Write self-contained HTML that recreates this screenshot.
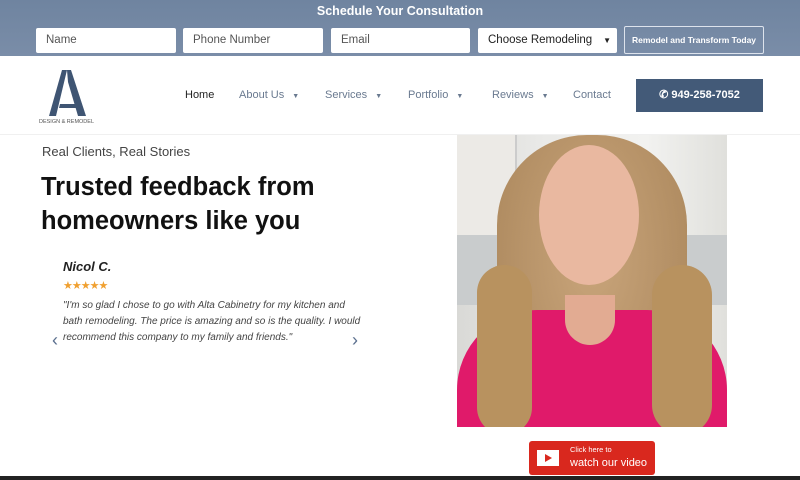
<!DOCTYPE html>
<html><head><style>
*{margin:0;padding:0;box-sizing:border-box}
body{width:800px;height:480px;overflow:hidden;background:#fff;font-family:"Liberation Sans",sans-serif;position:relative}
.top{position:absolute;left:0;top:0;width:800px;height:56px;background:linear-gradient(#6f84a0,#7a8da8)}
.top h3{position:absolute;top:4px;left:0;width:800px;text-align:center;color:#fff;font-size:12.5px;font-weight:bold}
.in{position:absolute;top:28px;height:25px;background:#fff;border-radius:2px;font-size:11.5px;color:#555;padding:6px 10px}
.btn{position:absolute;left:624px;top:26px;width:140px;height:28px;border:1px solid #dde3ec;border-radius:2px;color:#fff;font-size:8.5px;font-weight:bold;text-align:center;line-height:26px}
.nav{position:absolute;top:89px;font-size:11px;color:#6a7a90}
.car{font-size:7px;margin-left:8px}
.phone{position:absolute;left:636px;top:79px;width:127px;height:33px;background:#435a78;color:#fff;font-size:11px;font-weight:bold;text-align:center;line-height:33px}
.photo{position:absolute;left:457px;top:135px;width:270px;height:292px;overflow:hidden;background:linear-gradient(90deg,#d9d9d6 0,#e9e9e7 30%,#f2f2f0 70%,#e0e0dc 100%)}
</style></head><body>
<div class="top"><h3>Schedule Your Consultation</h3>
<div class="in" style="left:36px;width:140px">Name</div>
<div class="in" style="left:183px;width:140px">Phone Number</div>
<div class="in" style="left:331px;width:139px">Email</div>
<div class="in" style="left:478px;width:139px;color:#222">Choose Remodeling<span style="position:absolute;right:6px;top:8px;font-size:8px">▼</span></div>
<div class="btn">Remodel and Transform Today</div></div>
<svg style="position:absolute;left:38px;top:68px" width="60" height="58"><polygon points="24,2 29,2 18,48 11,48" fill="#3f5573"/><polygon points="29,2 33,2 48,48 40,48 30,14" fill="#3f5573"/><polygon points="22,36 40,36 41,40 21,40" fill="#3f5573"/><text x="1" y="55" font-size="5.5" fill="#555" font-family="Liberation Sans">DESIGN &amp; REMODEL</text></svg>
<div class="nav" style="left:185px;color:#222">Home</div>
<div class="nav" style="left:239px">About Us<span class="car">▼</span></div>
<div class="nav" style="left:325px">Services<span class="car">▼</span></div>
<div class="nav" style="left:408px">Portfolio<span class="car">▼</span></div>
<div class="nav" style="left:492px">Reviews<span class="car">▼</span></div>
<div class="nav" style="left:573px">Contact</div>
<div class="phone">✆ 949-258-7052</div>
<div style="position:absolute;left:0;top:134px;width:800px;height:1px;background:#f0f0f0"></div>
<div style="position:absolute;left:42px;top:144px;font-size:13px;color:#444">Real Clients, Real Stories</div>
<div style="position:absolute;left:41px;top:170px;font-size:25.5px;line-height:34px;color:#111;font-weight:bold">Trusted feedback from<br>homeowners like you</div>
<div style="position:absolute;left:63px;top:259px;font-size:13px;font-weight:bold;font-style:italic;color:#222">Nicol C.</div>
<div style="position:absolute;left:63px;top:279px;font-size:11px;color:#f0a030;letter-spacing:-1px">★★★★★</div>
<div style="position:absolute;left:63px;top:298px;width:300px;font-size:10px;line-height:16px;font-style:italic;color:#444">"I'm so glad I chose to go with Alta Cabinetry for my kitchen and bath remodeling. The price is amazing and so is the quality. I would recommend this company to my family and friends."</div>
<div style="position:absolute;left:52px;top:330px;font-size:18px;color:#5a6f8e">‹</div>
<div style="position:absolute;left:352px;top:330px;font-size:18px;color:#5a6f8e">›</div>
<div class="photo">
<div style="position:absolute;left:0;top:0;width:60px;height:100px;background:#eceae6;border-right:2px solid #ccc"></div>
<div style="position:absolute;left:0;top:100px;width:270px;height:70px;background:#c9cccd"></div>
<div style="position:absolute;left:40px;top:0;width:190px;height:300px;border-radius:90px 90px 40px 40px;background:radial-gradient(ellipse at 50% 40%,#c9a57b,#a78358)"></div>
<div style="position:absolute;left:82px;top:10px;width:100px;height:140px;border-radius:50%;background:#e9b8a0"></div>
<div style="position:absolute;left:0;top:175px;width:270px;height:120px;border-radius:80px 80px 0 0;background:#e01a6a"></div>
<div style="position:absolute;left:20px;top:130px;width:55px;height:170px;border-radius:30px;background:#b8925f"></div>
<div style="position:absolute;left:195px;top:130px;width:60px;height:170px;border-radius:30px;background:#b8925f"></div>
<div style="position:absolute;left:108px;top:160px;width:50px;height:50px;background:#e2ab92;border-radius:0 0 25px 25px"></div>
</div>
<div style="position:absolute;left:529px;top:441px;width:126px;height:34px;background:#d9281e;border-radius:3px;color:#fff">
<div style="position:absolute;left:8px;top:9px;width:22px;height:16px;background:#fff"><div style="position:absolute;left:8px;top:4px;border-left:7px solid #d9281e;border-top:4px solid transparent;border-bottom:4px solid transparent"></div></div>
<div style="position:absolute;left:41px;top:4px;font-size:7.5px">Click here to</div>
<div style="position:absolute;left:41px;top:16px;font-size:11px">watch our video</div></div>
<div style="position:absolute;left:0;top:476px;width:800px;height:4px;background:#222"></div>
</body></html>
